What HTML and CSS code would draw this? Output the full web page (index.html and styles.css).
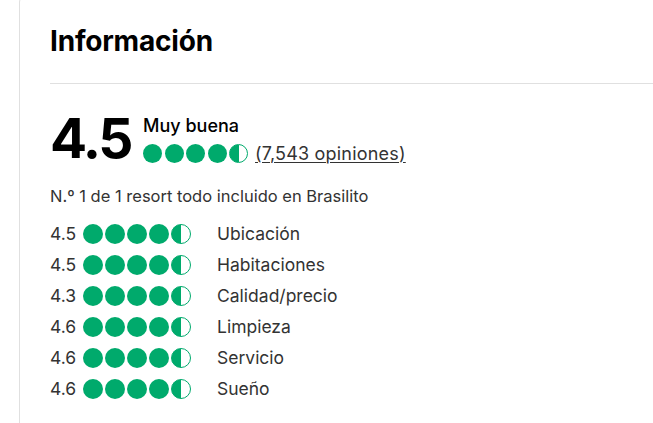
FILE: index.html
```html
<!DOCTYPE html>
<html lang="es">
<head>
    <meta charset="UTF-8">
    <meta name="viewport" content="width=device-width, initial-scale=1.0">
    <title>Información</title>
    <link rel="stylesheet" href="styles.css">
</head>
<body>
    <section class="card">
        <h2 class="card-title">Información</h2>
        <hr class="divider">

        <div class="summary">
            <div class="score">4.5</div>
            <div class="score-info">
                <div class="score-label">Muy buena</div>
                <div class="score-line">
                    <span class="bubbles big">
                        <span class="bubble"></span>
                        <span class="bubble"></span>
                        <span class="bubble"></span>
                        <span class="bubble"></span>
                        <span class="bubble half"></span>
                    </span>
                    <a href="#" class="reviews">(7,543 opiniones)</a>
                </div>
            </div>
        </div>

        <p class="rank">N.º 1 de 1 resort todo incluido en Brasilito</p>

        <ul class="ratings">
            <li class="rating-row">
                <span class="rating-num">4.5</span>
                <span class="bubbles"><span class="bubble"></span><span class="bubble"></span><span class="bubble"></span><span class="bubble"></span><span class="bubble half"></span></span>
                <span class="rating-name">Ubicación</span>
            </li>
            <li class="rating-row">
                <span class="rating-num">4.5</span>
                <span class="bubbles"><span class="bubble"></span><span class="bubble"></span><span class="bubble"></span><span class="bubble"></span><span class="bubble half"></span></span>
                <span class="rating-name">Habitaciones</span>
            </li>
            <li class="rating-row">
                <span class="rating-num">4.3</span>
                <span class="bubbles"><span class="bubble"></span><span class="bubble"></span><span class="bubble"></span><span class="bubble"></span><span class="bubble half"></span></span>
                <span class="rating-name">Calidad/precio</span>
            </li>
            <li class="rating-row">
                <span class="rating-num">4.6</span>
                <span class="bubbles"><span class="bubble"></span><span class="bubble"></span><span class="bubble"></span><span class="bubble"></span><span class="bubble half"></span></span>
                <span class="rating-name">Limpieza</span>
            </li>
            <li class="rating-row">
                <span class="rating-num">4.6</span>
                <span class="bubbles"><span class="bubble"></span><span class="bubble"></span><span class="bubble"></span><span class="bubble"></span><span class="bubble half"></span></span>
                <span class="rating-name">Servicio</span>
            </li>
            <li class="rating-row">
                <span class="rating-num">4.6</span>
                <span class="bubbles"><span class="bubble"></span><span class="bubble"></span><span class="bubble"></span><span class="bubble"></span><span class="bubble half"></span></span>
                <span class="rating-name">Sueño</span>
            </li>
        </ul>
    </section>
</body>
</html>
```

FILE: styles.css
```css
/* Basic reset */
* {
    margin: 0;
    padding: 0;
    box-sizing: border-box;
}

body {
    font-family: Inter, "Noto Sans", sans-serif;
    background: #ffffff;
    color: #000000;
    overflow: hidden;
    height: 100vh;
}

.card {
    margin: -10px 0 0 19px;
    width: 760px;
    border: 1px solid #e0e0e0;
    border-radius: 12px;
    padding: 32px 30px 40px;
}

.card-title {
    font-size: 28px;
    font-weight: 700;
    line-height: 36px;
    letter-spacing: -0.2px;
}

.divider {
    border: none;
    border-top: 1px solid #e0e0e0;
    margin-top: 24px;
}

.summary {
    display: flex;
    margin-top: 27px;
}

.score {
    font-size: 55px;
    font-weight: 700;
    line-height: 55px;
    letter-spacing: -2.5px;
    margin-right: 12px;
}

.score-info {
    padding-top: 5px;
}

.score-label {
    font-size: 18px;
    font-weight: 500;
    line-height: 20px;
}

.score-line {
    display: flex;
    align-items: center;
    margin-top: 7px;
    height: 20px;
}

.reviews {
    font-size: 18px;
    letter-spacing: 0.2px;
    color: #333333;
    margin-left: 7px;
    text-decoration: underline;
    text-decoration-thickness: 1px;
    text-underline-offset: 2px;
}

.rank {
    font-size: 16.5px;
    line-height: 20px;
    color: #333333;
    margin-top: 20px;
}

.ratings {
    list-style: none;
    margin-top: 12px;
}

.rating-row {
    display: flex;
    align-items: center;
    height: 31px;
    font-size: 17.5px;
    color: #333333;
}

.rating-num {
    width: 33px;
}

.rating-name {
    margin-left: 26px;
}

.bubbles {
    display: flex;
    gap: 2px;
}

.bubble {
    width: 20px;
    height: 20px;
    border-radius: 50%;
    background-color: #00aa6c;
}

.bubble.half {
    border: 1.5px solid #00aa6c;
    background: linear-gradient(90deg, #00aa6c 50%, #ffffff 50%);
}

.bubbles.big {
    gap: 2.5px;
}

.bubbles.big .bubble {
    width: 19px;
    height: 19px;
}
```
